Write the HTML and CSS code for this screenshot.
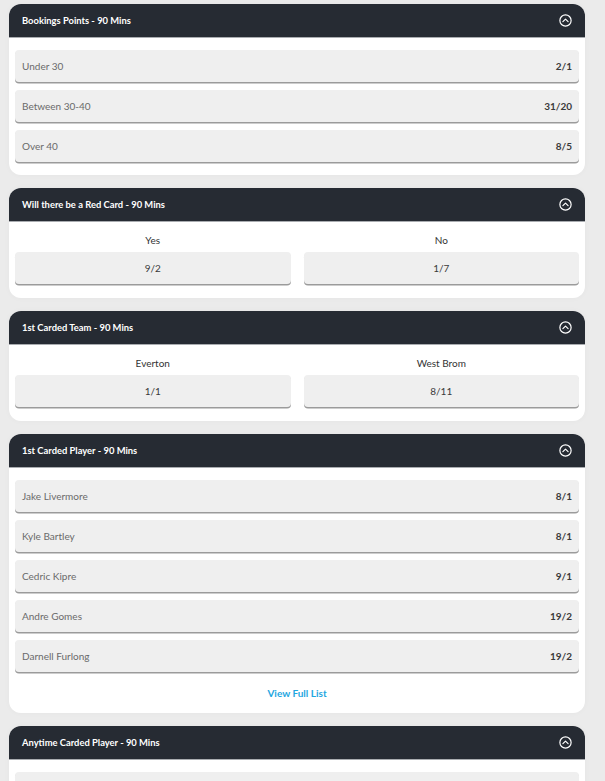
FILE: index.html
```html
<!DOCTYPE html>
<html>
<head>
<meta charset="utf-8">
<link rel="stylesheet" href="styles.css">
</head>
<body>
<div class="page">
  <section class="card">
    <div class="card-head"><span>Bookings Points - 90 Mins</span><svg class="chev" viewBox="0 0 12 12"><circle cx="6" cy="6" r="5.2"/><path d="M3.6 7.1 L6 4.7 L8.4 7.1"/></svg></div>
    <div class="card-body list">
      <div class="row"><span class="name">Under 30</span><span class="odds">2/1</span></div>
      <div class="row"><span class="name">Between 30-40</span><span class="odds">31/20</span></div>
      <div class="row"><span class="name">Over 40</span><span class="odds">8/5</span></div>
    </div>
  </section>

  <section class="card">
    <div class="card-head"><span>Will there be a Red Card - 90 Mins</span><svg class="chev" viewBox="0 0 12 12"><circle cx="6" cy="6" r="5.2"/><path d="M3.6 7.1 L6 4.7 L8.4 7.1"/></svg></div>
    <div class="card-body cols">
      <div class="col"><div class="label">Yes</div><div class="btn">9/2</div></div>
      <div class="col"><div class="label">No</div><div class="btn">1/7</div></div>
    </div>
  </section>

  <section class="card">
    <div class="card-head"><span>1st Carded Team - 90 Mins</span><svg class="chev" viewBox="0 0 12 12"><circle cx="6" cy="6" r="5.2"/><path d="M3.6 7.1 L6 4.7 L8.4 7.1"/></svg></div>
    <div class="card-body cols">
      <div class="col"><div class="label">Everton</div><div class="btn">1/1</div></div>
      <div class="col"><div class="label">West Brom</div><div class="btn">8/11</div></div>
    </div>
  </section>

  <section class="card">
    <div class="card-head"><span>1st Carded Player - 90 Mins</span><svg class="chev" viewBox="0 0 12 12"><circle cx="6" cy="6" r="5.2"/><path d="M3.6 7.1 L6 4.7 L8.4 7.1"/></svg></div>
    <div class="card-body list more">
      <div class="row"><span class="name">Jake Livermore</span><span class="odds">8/1</span></div>
      <div class="row"><span class="name">Kyle Bartley</span><span class="odds">8/1</span></div>
      <div class="row"><span class="name">Cedric Kipre</span><span class="odds">9/1</span></div>
      <div class="row"><span class="name">Andre Gomes</span><span class="odds">19/2</span></div>
      <div class="row"><span class="name">Darnell Furlong</span><span class="odds">19/2</span></div>
      <a class="view-all" href="#">View Full List</a>
    </div>
  </section>

  <section class="card">
    <div class="card-head"><span>Anytime Carded Player - 90 Mins</span><svg class="chev" viewBox="0 0 12 12"><circle cx="6" cy="6" r="5.2"/><path d="M3.6 7.1 L6 4.7 L8.4 7.1"/></svg></div>
    <div class="card-body list">
      <div class="row row-empty"></div>
    </div>
  </section>
</div>
</body>
</html>
```

FILE: styles.css
```css
html, body {
  margin: 0;
  padding: 0;
  background: #ebebeb;
  font-family: Lato, "Liberation Sans", sans-serif;
  font-size: 10px;
}
.page {
  padding: 4px 20px 0 9px;
  display: flex;
  flex-direction: column;
  gap: 13px;
}
.card {
  background: #fff;
  border-radius: 12px;
  overflow: hidden;
  box-shadow: 0 0 6px rgba(0,0,0,0.03);
}
.card-head {
  height: 33px;
  background: #262b33;
  color: #fff;
  font-weight: 700;
  font-size: 9.4px;
  display: flex;
  align-items: center;
  justify-content: space-between;
  padding: 0 13px 0 13px;
  border-bottom: 1px solid #a9acb0;
}
.chev {
  width: 13px;
  height: 13px;
  fill: none;
  stroke: #fff;
  stroke-width: 1.1;
  stroke-linecap: round;
  stroke-linejoin: round;
}
.card-body {
  padding: 12px 6px 13px;
}
.list {
  display: flex;
  flex-direction: column;
  gap: 8px;
}
.row {
  height: 32px;
  background: #efefef;
  border-radius: 4px;
  box-shadow: 0 1.5px 0 #9b9b9b;
  display: flex;
  align-items: center;
  justify-content: space-between;
  padding: 0 7px 0 7px;
}
.name {
  color: #6a6a6a;
}
.odds {
  color: #3a3a3a;
  font-weight: 700;
}
.more {
  padding-bottom: 0;
}
.view-all {
  display: block;
  text-align: center;
  color: #1ea6df;
  font-weight: 700;
  text-decoration: none;
  line-height: 40px;
  margin-top: -8px;
  padding-top: 1px;
}
.cols {
  display: grid;
  grid-template-columns: 1fr 1fr;
  column-gap: 13px;
  padding-top: 12px;
  padding-bottom: 14px;
}
.label {
  text-align: center;
  color: #333;
  height: 18px;
  line-height: 12px;
}
.btn {
  height: 32px;
  background: #efefef;
  border-radius: 4px;
  box-shadow: 0 1.5px 0 #9b9b9b;
  display: flex;
  align-items: center;
  justify-content: center;
  color: #3a3a3a;
}
```
